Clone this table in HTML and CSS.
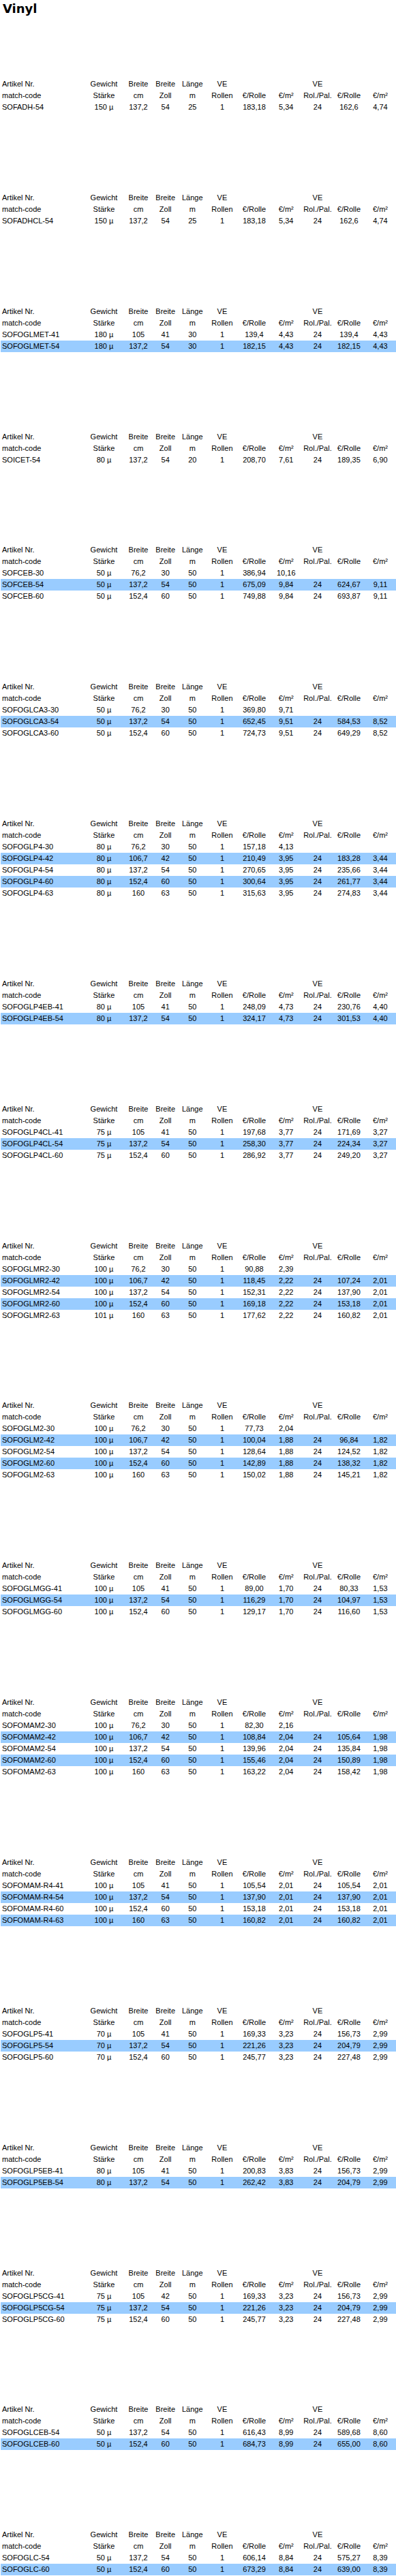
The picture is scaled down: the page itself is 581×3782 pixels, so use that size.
FILE: index.html
```html
<!DOCTYPE html>
<html lang="de">
<head>
<meta charset="utf-8">
<title>Vinyl</title>
<link rel="stylesheet" href="styles.css">
</head>
<body>
<h1 class="title">Vinyl</h1>

<table class="sheet">
<colgroup><col class="c1"><col class="c2"><col class="c3"><col class="c4"><col class="c5"><col class="c6"><col class="c7"><col class="c8"><col class="c9"><col class="c10"><col class="c11"></colgroup>
<tr><td class="code">Artikel Nr.</td><td>Gewicht</td><td>Breite</td><td>Breite</td><td>Länge</td><td>VE</td><td></td><td></td><td>VE</td><td></td><td></td></tr>
<tr><td class="code">match-code</td><td>Stärke</td><td>cm</td><td>Zoll</td><td>m</td><td>Rollen</td><td>€/Rolle</td><td>€/m²</td><td>Rol./Pal.</td><td>€/Rolle</td><td>€/m²</td></tr>
<tr><td class="code">SOFADH-54</td><td>150 µ</td><td>137,2</td><td>54</td><td>25</td><td>1</td><td>183,18</td><td>5,34</td><td>24</td><td>162,6</td><td>4,74</td></tr>
</table>

<table class="sheet">
<colgroup><col class="c1"><col class="c2"><col class="c3"><col class="c4"><col class="c5"><col class="c6"><col class="c7"><col class="c8"><col class="c9"><col class="c10"><col class="c11"></colgroup>
<tr><td class="code">Artikel Nr.</td><td>Gewicht</td><td>Breite</td><td>Breite</td><td>Länge</td><td>VE</td><td></td><td></td><td>VE</td><td></td><td></td></tr>
<tr><td class="code">match-code</td><td>Stärke</td><td>cm</td><td>Zoll</td><td>m</td><td>Rollen</td><td>€/Rolle</td><td>€/m²</td><td>Rol./Pal.</td><td>€/Rolle</td><td>€/m²</td></tr>
<tr><td class="code">SOFADHCL-54</td><td>150 µ</td><td>137,2</td><td>54</td><td>25</td><td>1</td><td>183,18</td><td>5,34</td><td>24</td><td>162,6</td><td>4,74</td></tr>
</table>

<table class="sheet">
<colgroup><col class="c1"><col class="c2"><col class="c3"><col class="c4"><col class="c5"><col class="c6"><col class="c7"><col class="c8"><col class="c9"><col class="c10"><col class="c11"></colgroup>
<tr><td class="code">Artikel Nr.</td><td>Gewicht</td><td>Breite</td><td>Breite</td><td>Länge</td><td>VE</td><td></td><td></td><td>VE</td><td></td><td></td></tr>
<tr><td class="code">match-code</td><td>Stärke</td><td>cm</td><td>Zoll</td><td>m</td><td>Rollen</td><td>€/Rolle</td><td>€/m²</td><td>Rol./Pal.</td><td>€/Rolle</td><td>€/m²</td></tr>
<tr><td class="code">SOFOGLMET-41</td><td>180 µ</td><td>105</td><td>41</td><td>30</td><td>1</td><td>139,4</td><td>4,43</td><td>24</td><td>139,4</td><td>4,43</td></tr>
<tr class="hl"><td class="code">SOFOGLMET-54</td><td>180 µ</td><td>137,2</td><td>54</td><td>30</td><td>1</td><td>182,15</td><td>4,43</td><td>24</td><td>182,15</td><td>4,43</td></tr>
</table>

<table class="sheet">
<colgroup><col class="c1"><col class="c2"><col class="c3"><col class="c4"><col class="c5"><col class="c6"><col class="c7"><col class="c8"><col class="c9"><col class="c10"><col class="c11"></colgroup>
<tr><td class="code">Artikel Nr.</td><td>Gewicht</td><td>Breite</td><td>Breite</td><td>Länge</td><td>VE</td><td></td><td></td><td>VE</td><td></td><td></td></tr>
<tr><td class="code">match-code</td><td>Stärke</td><td>cm</td><td>Zoll</td><td>m</td><td>Rollen</td><td>€/Rolle</td><td>€/m²</td><td>Rol./Pal.</td><td>€/Rolle</td><td>€/m²</td></tr>
<tr><td class="code">SOICET-54</td><td>80 µ</td><td>137,2</td><td>54</td><td>20</td><td>1</td><td>208,70</td><td>7,61</td><td>24</td><td>189,35</td><td>6,90</td></tr>
</table>

<table class="sheet">
<colgroup><col class="c1"><col class="c2"><col class="c3"><col class="c4"><col class="c5"><col class="c6"><col class="c7"><col class="c8"><col class="c9"><col class="c10"><col class="c11"></colgroup>
<tr><td class="code">Artikel Nr.</td><td>Gewicht</td><td>Breite</td><td>Breite</td><td>Länge</td><td>VE</td><td></td><td></td><td>VE</td><td></td><td></td></tr>
<tr><td class="code">match-code</td><td>Stärke</td><td>cm</td><td>Zoll</td><td>m</td><td>Rollen</td><td>€/Rolle</td><td>€/m²</td><td>Rol./Pal.</td><td>€/Rolle</td><td>€/m²</td></tr>
<tr><td class="code">SOFCEB-30</td><td>50 µ</td><td>76,2</td><td>30</td><td>50</td><td>1</td><td>386,94</td><td>10,16</td><td></td><td></td><td></td></tr>
<tr class="hl"><td class="code">SOFCEB-54</td><td>50 µ</td><td>137,2</td><td>54</td><td>50</td><td>1</td><td>675,09</td><td>9,84</td><td>24</td><td>624,67</td><td>9,11</td></tr>
<tr><td class="code">SOFCEB-60</td><td>50 µ</td><td>152,4</td><td>60</td><td>50</td><td>1</td><td>749,88</td><td>9,84</td><td>24</td><td>693,87</td><td>9,11</td></tr>
</table>

<table class="sheet">
<colgroup><col class="c1"><col class="c2"><col class="c3"><col class="c4"><col class="c5"><col class="c6"><col class="c7"><col class="c8"><col class="c9"><col class="c10"><col class="c11"></colgroup>
<tr><td class="code">Artikel Nr.</td><td>Gewicht</td><td>Breite</td><td>Breite</td><td>Länge</td><td>VE</td><td></td><td></td><td>VE</td><td></td><td></td></tr>
<tr><td class="code">match-code</td><td>Stärke</td><td>cm</td><td>Zoll</td><td>m</td><td>Rollen</td><td>€/Rolle</td><td>€/m²</td><td>Rol./Pal.</td><td>€/Rolle</td><td>€/m²</td></tr>
<tr><td class="code">SOFOGLCA3-30</td><td>50 µ</td><td>76,2</td><td>30</td><td>50</td><td>1</td><td>369,80</td><td>9,71</td><td></td><td></td><td></td></tr>
<tr class="hl"><td class="code">SOFOGLCA3-54</td><td>50 µ</td><td>137,2</td><td>54</td><td>50</td><td>1</td><td>652,45</td><td>9,51</td><td>24</td><td>584,53</td><td>8,52</td></tr>
<tr><td class="code">SOFOGLCA3-60</td><td>50 µ</td><td>152,4</td><td>60</td><td>50</td><td>1</td><td>724,73</td><td>9,51</td><td>24</td><td>649,29</td><td>8,52</td></tr>
</table>

<table class="sheet">
<colgroup><col class="c1"><col class="c2"><col class="c3"><col class="c4"><col class="c5"><col class="c6"><col class="c7"><col class="c8"><col class="c9"><col class="c10"><col class="c11"></colgroup>
<tr><td class="code">Artikel Nr.</td><td>Gewicht</td><td>Breite</td><td>Breite</td><td>Länge</td><td>VE</td><td></td><td></td><td>VE</td><td></td><td></td></tr>
<tr><td class="code">match-code</td><td>Stärke</td><td>cm</td><td>Zoll</td><td>m</td><td>Rollen</td><td>€/Rolle</td><td>€/m²</td><td>Rol./Pal.</td><td>€/Rolle</td><td>€/m²</td></tr>
<tr><td class="code">SOFOGLP4-30</td><td>80 µ</td><td>76,2</td><td>30</td><td>50</td><td>1</td><td>157,18</td><td>4,13</td><td></td><td></td><td></td></tr>
<tr class="hl"><td class="code">SOFOGLP4-42</td><td>80 µ</td><td>106,7</td><td>42</td><td>50</td><td>1</td><td>210,49</td><td>3,95</td><td>24</td><td>183,28</td><td>3,44</td></tr>
<tr><td class="code">SOFOGLP4-54</td><td>80 µ</td><td>137,2</td><td>54</td><td>50</td><td>1</td><td>270,65</td><td>3,95</td><td>24</td><td>235,66</td><td>3,44</td></tr>
<tr class="hl"><td class="code">SOFOGLP4-60</td><td>80 µ</td><td>152,4</td><td>60</td><td>50</td><td>1</td><td>300,64</td><td>3,95</td><td>24</td><td>261,77</td><td>3,44</td></tr>
<tr><td class="code">SOFOGLP4-63</td><td>80 µ</td><td>160</td><td>63</td><td>50</td><td>1</td><td>315,63</td><td>3,95</td><td>24</td><td>274,83</td><td>3,44</td></tr>
</table>

<table class="sheet">
<colgroup><col class="c1"><col class="c2"><col class="c3"><col class="c4"><col class="c5"><col class="c6"><col class="c7"><col class="c8"><col class="c9"><col class="c10"><col class="c11"></colgroup>
<tr><td class="code">Artikel Nr.</td><td>Gewicht</td><td>Breite</td><td>Breite</td><td>Länge</td><td>VE</td><td></td><td></td><td>VE</td><td></td><td></td></tr>
<tr><td class="code">match-code</td><td>Stärke</td><td>cm</td><td>Zoll</td><td>m</td><td>Rollen</td><td>€/Rolle</td><td>€/m²</td><td>Rol./Pal.</td><td>€/Rolle</td><td>€/m²</td></tr>
<tr><td class="code">SOFOGLP4EB-41</td><td>80 µ</td><td>105</td><td>41</td><td>50</td><td>1</td><td>248,09</td><td>4,73</td><td>24</td><td>230,76</td><td>4,40</td></tr>
<tr class="hl"><td class="code">SOFOGLP4EB-54</td><td>80 µ</td><td>137,2</td><td>54</td><td>50</td><td>1</td><td>324,17</td><td>4,73</td><td>24</td><td>301,53</td><td>4,40</td></tr>
</table>

<table class="sheet">
<colgroup><col class="c1"><col class="c2"><col class="c3"><col class="c4"><col class="c5"><col class="c6"><col class="c7"><col class="c8"><col class="c9"><col class="c10"><col class="c11"></colgroup>
<tr><td class="code">Artikel Nr.</td><td>Gewicht</td><td>Breite</td><td>Breite</td><td>Länge</td><td>VE</td><td></td><td></td><td>VE</td><td></td><td></td></tr>
<tr><td class="code">match-code</td><td>Stärke</td><td>cm</td><td>Zoll</td><td>m</td><td>Rollen</td><td>€/Rolle</td><td>€/m²</td><td>Rol./Pal.</td><td>€/Rolle</td><td>€/m²</td></tr>
<tr><td class="code">SOFOGLP4CL-41</td><td>75 µ</td><td>105</td><td>41</td><td>50</td><td>1</td><td>197,68</td><td>3,77</td><td>24</td><td>171,69</td><td>3,27</td></tr>
<tr class="hl"><td class="code">SOFOGLP4CL-54</td><td>75 µ</td><td>137,2</td><td>54</td><td>50</td><td>1</td><td>258,30</td><td>3,77</td><td>24</td><td>224,34</td><td>3,27</td></tr>
<tr><td class="code">SOFOGLP4CL-60</td><td>75 µ</td><td>152,4</td><td>60</td><td>50</td><td>1</td><td>286,92</td><td>3,77</td><td>24</td><td>249,20</td><td>3,27</td></tr>
</table>

<table class="sheet">
<colgroup><col class="c1"><col class="c2"><col class="c3"><col class="c4"><col class="c5"><col class="c6"><col class="c7"><col class="c8"><col class="c9"><col class="c10"><col class="c11"></colgroup>
<tr><td class="code">Artikel Nr.</td><td>Gewicht</td><td>Breite</td><td>Breite</td><td>Länge</td><td>VE</td><td></td><td></td><td>VE</td><td></td><td></td></tr>
<tr><td class="code">match-code</td><td>Stärke</td><td>cm</td><td>Zoll</td><td>m</td><td>Rollen</td><td>€/Rolle</td><td>€/m²</td><td>Rol./Pal.</td><td>€/Rolle</td><td>€/m²</td></tr>
<tr><td class="code">SOFOGLMR2-30</td><td>100 µ</td><td>76,2</td><td>30</td><td>50</td><td>1</td><td>90,88</td><td>2,39</td><td></td><td></td><td></td></tr>
<tr class="hl"><td class="code">SOFOGLMR2-42</td><td>100 µ</td><td>106,7</td><td>42</td><td>50</td><td>1</td><td>118,45</td><td>2,22</td><td>24</td><td>107,24</td><td>2,01</td></tr>
<tr><td class="code">SOFOGLMR2-54</td><td>100 µ</td><td>137,2</td><td>54</td><td>50</td><td>1</td><td>152,31</td><td>2,22</td><td>24</td><td>137,90</td><td>2,01</td></tr>
<tr class="hl"><td class="code">SOFOGLMR2-60</td><td>100 µ</td><td>152,4</td><td>60</td><td>50</td><td>1</td><td>169,18</td><td>2,22</td><td>24</td><td>153,18</td><td>2,01</td></tr>
<tr><td class="code">SOFOGLMR2-63</td><td>101 µ</td><td>160</td><td>63</td><td>50</td><td>1</td><td>177,62</td><td>2,22</td><td>24</td><td>160,82</td><td>2,01</td></tr>
</table>

<table class="sheet">
<colgroup><col class="c1"><col class="c2"><col class="c3"><col class="c4"><col class="c5"><col class="c6"><col class="c7"><col class="c8"><col class="c9"><col class="c10"><col class="c11"></colgroup>
<tr><td class="code">Artikel Nr.</td><td>Gewicht</td><td>Breite</td><td>Breite</td><td>Länge</td><td>VE</td><td></td><td></td><td>VE</td><td></td><td></td></tr>
<tr><td class="code">match-code</td><td>Stärke</td><td>cm</td><td>Zoll</td><td>m</td><td>Rollen</td><td>€/Rolle</td><td>€/m²</td><td>Rol./Pal.</td><td>€/Rolle</td><td>€/m²</td></tr>
<tr><td class="code">SOFOGLM2-30</td><td>100 µ</td><td>76,2</td><td>30</td><td>50</td><td>1</td><td>77,73</td><td>2,04</td><td></td><td></td><td></td></tr>
<tr class="hl"><td class="code">SOFOGLM2-42</td><td>100 µ</td><td>106,7</td><td>42</td><td>50</td><td>1</td><td>100,04</td><td>1,88</td><td>24</td><td>96,84</td><td>1,82</td></tr>
<tr><td class="code">SOFOGLM2-54</td><td>100 µ</td><td>137,2</td><td>54</td><td>50</td><td>1</td><td>128,64</td><td>1,88</td><td>24</td><td>124,52</td><td>1,82</td></tr>
<tr class="hl"><td class="code">SOFOGLM2-60</td><td>100 µ</td><td>152,4</td><td>60</td><td>50</td><td>1</td><td>142,89</td><td>1,88</td><td>24</td><td>138,32</td><td>1,82</td></tr>
<tr><td class="code">SOFOGLM2-63</td><td>100 µ</td><td>160</td><td>63</td><td>50</td><td>1</td><td>150,02</td><td>1,88</td><td>24</td><td>145,21</td><td>1,82</td></tr>
</table>

<table class="sheet">
<colgroup><col class="c1"><col class="c2"><col class="c3"><col class="c4"><col class="c5"><col class="c6"><col class="c7"><col class="c8"><col class="c9"><col class="c10"><col class="c11"></colgroup>
<tr><td class="code">Artikel Nr.</td><td>Gewicht</td><td>Breite</td><td>Breite</td><td>Länge</td><td>VE</td><td></td><td></td><td>VE</td><td></td><td></td></tr>
<tr><td class="code">match-code</td><td>Stärke</td><td>cm</td><td>Zoll</td><td>m</td><td>Rollen</td><td>€/Rolle</td><td>€/m²</td><td>Rol./Pal.</td><td>€/Rolle</td><td>€/m²</td></tr>
<tr><td class="code">SOFOGLMGG-41</td><td>100 µ</td><td>105</td><td>41</td><td>50</td><td>1</td><td>89,00</td><td>1,70</td><td>24</td><td>80,33</td><td>1,53</td></tr>
<tr class="hl"><td class="code">SOFOGLMGG-54</td><td>100 µ</td><td>137,2</td><td>54</td><td>50</td><td>1</td><td>116,29</td><td>1,70</td><td>24</td><td>104,97</td><td>1,53</td></tr>
<tr><td class="code">SOFOGLMGG-60</td><td>100 µ</td><td>152,4</td><td>60</td><td>50</td><td>1</td><td>129,17</td><td>1,70</td><td>24</td><td>116,60</td><td>1,53</td></tr>
</table>

<table class="sheet">
<colgroup><col class="c1"><col class="c2"><col class="c3"><col class="c4"><col class="c5"><col class="c6"><col class="c7"><col class="c8"><col class="c9"><col class="c10"><col class="c11"></colgroup>
<tr><td class="code">Artikel Nr.</td><td>Gewicht</td><td>Breite</td><td>Breite</td><td>Länge</td><td>VE</td><td></td><td></td><td>VE</td><td></td><td></td></tr>
<tr><td class="code">match-code</td><td>Stärke</td><td>cm</td><td>Zoll</td><td>m</td><td>Rollen</td><td>€/Rolle</td><td>€/m²</td><td>Rol./Pal.</td><td>€/Rolle</td><td>€/m²</td></tr>
<tr><td class="code">SOFOMAM2-30</td><td>100 µ</td><td>76,2</td><td>30</td><td>50</td><td>1</td><td>82,30</td><td>2,16</td><td></td><td></td><td></td></tr>
<tr class="hl"><td class="code">SOFOMAM2-42</td><td>100 µ</td><td>106,7</td><td>42</td><td>50</td><td>1</td><td>108,84</td><td>2,04</td><td>24</td><td>105,64</td><td>1,98</td></tr>
<tr><td class="code">SOFOMAM2-54</td><td>100 µ</td><td>137,2</td><td>54</td><td>50</td><td>1</td><td>139,96</td><td>2,04</td><td>24</td><td>135,84</td><td>1,98</td></tr>
<tr class="hl"><td class="code">SOFOMAM2-60</td><td>100 µ</td><td>152,4</td><td>60</td><td>50</td><td>1</td><td>155,46</td><td>2,04</td><td>24</td><td>150,89</td><td>1,98</td></tr>
<tr><td class="code">SOFOMAM2-63</td><td>100 µ</td><td>160</td><td>63</td><td>50</td><td>1</td><td>163,22</td><td>2,04</td><td>24</td><td>158,42</td><td>1,98</td></tr>
</table>

<table class="sheet">
<colgroup><col class="c1"><col class="c2"><col class="c3"><col class="c4"><col class="c5"><col class="c6"><col class="c7"><col class="c8"><col class="c9"><col class="c10"><col class="c11"></colgroup>
<tr><td class="code">Artikel Nr.</td><td>Gewicht</td><td>Breite</td><td>Breite</td><td>Länge</td><td>VE</td><td></td><td></td><td>VE</td><td></td><td></td></tr>
<tr><td class="code">match-code</td><td>Stärke</td><td>cm</td><td>Zoll</td><td>m</td><td>Rollen</td><td>€/Rolle</td><td>€/m²</td><td>Rol./Pal.</td><td>€/Rolle</td><td>€/m²</td></tr>
<tr><td class="code">SOFOMAM-R4-41</td><td>100 µ</td><td>105</td><td>41</td><td>50</td><td>1</td><td>105,54</td><td>2,01</td><td>24</td><td>105,54</td><td>2,01</td></tr>
<tr class="hl"><td class="code">SOFOMAM-R4-54</td><td>100 µ</td><td>137,2</td><td>54</td><td>50</td><td>1</td><td>137,90</td><td>2,01</td><td>24</td><td>137,90</td><td>2,01</td></tr>
<tr><td class="code">SOFOMAM-R4-60</td><td>100 µ</td><td>152,4</td><td>60</td><td>50</td><td>1</td><td>153,18</td><td>2,01</td><td>24</td><td>153,18</td><td>2,01</td></tr>
<tr class="hl"><td class="code">SOFOMAM-R4-63</td><td>100 µ</td><td>160</td><td>63</td><td>50</td><td>1</td><td>160,82</td><td>2,01</td><td>24</td><td>160,82</td><td>2,01</td></tr>
</table>

<table class="sheet">
<colgroup><col class="c1"><col class="c2"><col class="c3"><col class="c4"><col class="c5"><col class="c6"><col class="c7"><col class="c8"><col class="c9"><col class="c10"><col class="c11"></colgroup>
<tr><td class="code">Artikel Nr.</td><td>Gewicht</td><td>Breite</td><td>Breite</td><td>Länge</td><td>VE</td><td></td><td></td><td>VE</td><td></td><td></td></tr>
<tr><td class="code">match-code</td><td>Stärke</td><td>cm</td><td>Zoll</td><td>m</td><td>Rollen</td><td>€/Rolle</td><td>€/m²</td><td>Rol./Pal.</td><td>€/Rolle</td><td>€/m²</td></tr>
<tr><td class="code">SOFOGLP5-41</td><td>70 µ</td><td>105</td><td>41</td><td>50</td><td>1</td><td>169,33</td><td>3,23</td><td>24</td><td>156,73</td><td>2,99</td></tr>
<tr class="hl"><td class="code">SOFOGLP5-54</td><td>70 µ</td><td>137,2</td><td>54</td><td>50</td><td>1</td><td>221,26</td><td>3,23</td><td>24</td><td>204,79</td><td>2,99</td></tr>
<tr><td class="code">SOFOGLP5-60</td><td>70 µ</td><td>152,4</td><td>60</td><td>50</td><td>1</td><td>245,77</td><td>3,23</td><td>24</td><td>227,48</td><td>2,99</td></tr>
</table>

<table class="sheet">
<colgroup><col class="c1"><col class="c2"><col class="c3"><col class="c4"><col class="c5"><col class="c6"><col class="c7"><col class="c8"><col class="c9"><col class="c10"><col class="c11"></colgroup>
<tr><td class="code">Artikel Nr.</td><td>Gewicht</td><td>Breite</td><td>Breite</td><td>Länge</td><td>VE</td><td></td><td></td><td>VE</td><td></td><td></td></tr>
<tr><td class="code">match-code</td><td>Stärke</td><td>cm</td><td>Zoll</td><td>m</td><td>Rollen</td><td>€/Rolle</td><td>€/m²</td><td>Rol./Pal.</td><td>€/Rolle</td><td>€/m²</td></tr>
<tr><td class="code">SOFOGLP5EB-41</td><td>80 µ</td><td>105</td><td>41</td><td>50</td><td>1</td><td>200,83</td><td>3,83</td><td>24</td><td>156,73</td><td>2,99</td></tr>
<tr class="hl"><td class="code">SOFOGLP5EB-54</td><td>80 µ</td><td>137,2</td><td>54</td><td>50</td><td>1</td><td>262,42</td><td>3,83</td><td>24</td><td>204,79</td><td>2,99</td></tr>
</table>

<table class="sheet">
<colgroup><col class="c1"><col class="c2"><col class="c3"><col class="c4"><col class="c5"><col class="c6"><col class="c7"><col class="c8"><col class="c9"><col class="c10"><col class="c11"></colgroup>
<tr><td class="code">Artikel Nr.</td><td>Gewicht</td><td>Breite</td><td>Breite</td><td>Länge</td><td>VE</td><td></td><td></td><td>VE</td><td></td><td></td></tr>
<tr><td class="code">match-code</td><td>Stärke</td><td>cm</td><td>Zoll</td><td>m</td><td>Rollen</td><td>€/Rolle</td><td>€/m²</td><td>Rol./Pal.</td><td>€/Rolle</td><td>€/m²</td></tr>
<tr><td class="code">SOFOGLP5CG-41</td><td>75 µ</td><td>105</td><td>42</td><td>50</td><td>1</td><td>169,33</td><td>3,23</td><td>24</td><td>156,73</td><td>2,99</td></tr>
<tr class="hl"><td class="code">SOFOGLP5CG-54</td><td>75 µ</td><td>137,2</td><td>54</td><td>50</td><td>1</td><td>221,26</td><td>3,23</td><td>24</td><td>204,79</td><td>2,99</td></tr>
<tr><td class="code">SOFOGLP5CG-60</td><td>75 µ</td><td>152,4</td><td>60</td><td>50</td><td>1</td><td>245,77</td><td>3,23</td><td>24</td><td>227,48</td><td>2,99</td></tr>
</table>

<table class="sheet">
<colgroup><col class="c1"><col class="c2"><col class="c3"><col class="c4"><col class="c5"><col class="c6"><col class="c7"><col class="c8"><col class="c9"><col class="c10"><col class="c11"></colgroup>
<tr><td class="code">Artikel Nr.</td><td>Gewicht</td><td>Breite</td><td>Breite</td><td>Länge</td><td>VE</td><td></td><td></td><td>VE</td><td></td><td></td></tr>
<tr><td class="code">match-code</td><td>Stärke</td><td>cm</td><td>Zoll</td><td>m</td><td>Rollen</td><td>€/Rolle</td><td>€/m²</td><td>Rol./Pal.</td><td>€/Rolle</td><td>€/m²</td></tr>
<tr><td class="code">SOFOGLCEB-54</td><td>50 µ</td><td>137,2</td><td>54</td><td>50</td><td>1</td><td>616,43</td><td>8,99</td><td>24</td><td>589,68</td><td>8,60</td></tr>
<tr class="hl"><td class="code">SOFOGLCEB-60</td><td>50 µ</td><td>152,4</td><td>60</td><td>50</td><td>1</td><td>684,73</td><td>8,99</td><td>24</td><td>655,00</td><td>8,60</td></tr>
</table>

<table class="sheet">
<colgroup><col class="c1"><col class="c2"><col class="c3"><col class="c4"><col class="c5"><col class="c6"><col class="c7"><col class="c8"><col class="c9"><col class="c10"><col class="c11"></colgroup>
<tr><td class="code">Artikel Nr.</td><td>Gewicht</td><td>Breite</td><td>Breite</td><td>Länge</td><td>VE</td><td></td><td></td><td>VE</td><td></td><td></td></tr>
<tr><td class="code">match-code</td><td>Stärke</td><td>cm</td><td>Zoll</td><td>m</td><td>Rollen</td><td>€/Rolle</td><td>€/m²</td><td>Rol./Pal.</td><td>€/Rolle</td><td>€/m²</td></tr>
<tr><td class="code">SOFOGLC-54</td><td>50 µ</td><td>137,2</td><td>54</td><td>50</td><td>1</td><td>606,14</td><td>8,84</td><td>24</td><td>575,27</td><td>8,39</td></tr>
<tr class="hl"><td class="code">SOFOGLC-60</td><td>50 µ</td><td>152,4</td><td>60</td><td>50</td><td>1</td><td>673,29</td><td>8,84</td><td>24</td><td>639,00</td><td>8,39</td></tr>
</table>
</body>
</html>
```

FILE: styles.css
```css
html {
  overflow: hidden;
}

body {
  margin: 0;
  padding: 0;
  background: #ffffff;
  color: #000000;
  font-family: "Liberation Sans", Arial, sans-serif;
  font-size: 11px;
}

.title {
  margin: 0 0 91px 0;
  padding: 2px 0 0 4px;
  height: 22px;
  font-family: "DejaVu Sans", "Liberation Sans", sans-serif;
  font-weight: bold;
  font-size: 18px;
  line-height: 22px;
}

.sheet {
  margin-left: 1px;
  width: 580px;
  table-layout: fixed;
  border-collapse: collapse;
  border-spacing: 0;
}

.sheet + .sheet {
  margin-top: 115.85px;
}

.sheet td {
  height: 17px;
  padding: 0;
  line-height: 17px;
  text-align: center;
  white-space: nowrap;
  overflow: visible;
}

.sheet td.code {
  text-align: left;
  padding-left: 2px;
}

.sheet tr.hl td {
  background: #99ccff;
}

.c1 { width: 121.4px; }
.c2 { width: 60.2px; }
.c3 { width: 40.8px; }
.c4 { width: 38.6px; }
.c5 { width: 40.6px; }
.c6 { width: 46.8px; }
.c7 { width: 47.2px; }
.c8 { width: 46.4px; }
.c9 { width: 46px; }
.c10 { width: 46px; }
.c11 { width: 46px; }
```
